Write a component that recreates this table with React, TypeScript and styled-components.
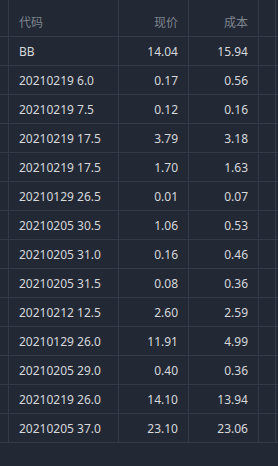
import React from 'react';
import styled, { createGlobalStyle } from 'styled-components';

const GlobalStyle = createGlobalStyle`
    html, body {
        margin: 0;
        padding: 0;
        background: #222834;
    }
    body {
        font-family: "Noto Sans", "Noto Sans CJK SC", sans-serif;
    }
`;

const Table = styled.div`
    width: 278px;
    height: 466px;
    background: #222834;
    overflow: hidden;
`;

const Row = styled.div<{ $header?: boolean }>`
    display: grid;
    grid-template-columns: 8px 110px 70px 70px 18px;
    height: ${p => (p.$header ? '37px' : '29px')};
    box-sizing: border-box;
    border-bottom: 1px solid #343a47;
    color: ${p => (p.$header ? '#7e8590' : '#d6d8dc')};
`;

const Cell = styled.div<{ $align?: 'left' | 'right'; $header?: boolean; $edge?: boolean }>`
    box-sizing: border-box;
    border-left: ${p => (p.$edge ? 'none' : '1px solid #343a47')};
    padding: ${p => (p.$header ? '7px 10px 0' : '0 10px')};
    display: flex;
    align-items: center;
    justify-content: ${p => (p.$align === 'right' ? 'flex-end' : 'flex-start')};
    font-size: 12px;
    white-space: nowrap;
`;

const Gutter = styled(Cell)`
    padding: 0;
    border-right: 1px solid #343a47;
`;

const rows: [string, string, string][] = [
    ['BB', '14.04', '15.94'],
    ['20210219 6.0', '0.17', '0.56'],
    ['20210219 7.5', '0.12', '0.16'],
    ['20210219 17.5', '3.79', '3.18'],
    ['20210219 17.5', '1.70', '1.63'],
    ['20210129 26.5', '0.01', '0.07'],
    ['20210205 30.5', '1.06', '0.53'],
    ['20210205 31.0', '0.16', '0.46'],
    ['20210205 31.5', '0.08', '0.36'],
    ['20210212 12.5', '2.60', '2.59'],
    ['20210129 26.0', '11.91', '4.99'],
    ['20210205 29.0', '0.40', '0.36'],
    ['20210219 26.0', '14.10', '13.94'],
    ['20210205 37.0', '23.10', '23.06'],
];

export default () => (
    <>
        <GlobalStyle />
        <Table>
            <Row $header>
                <Cell $edge $header />
                <Cell $header>代码</Cell>
                <Cell $header $align="right">现价</Cell>
                <Cell $header $align="right">成本</Cell>
                <Gutter $header />
            </Row>
            {rows.map(([code, price, cost], i) => (
                <Row key={i}>
                    <Cell $edge />
                    <Cell>{code}</Cell>
                    <Cell $align="right">{price}</Cell>
                    <Cell $align="right">{cost}</Cell>
                    <Gutter />
                </Row>
            ))}
        </Table>
    </>
);
